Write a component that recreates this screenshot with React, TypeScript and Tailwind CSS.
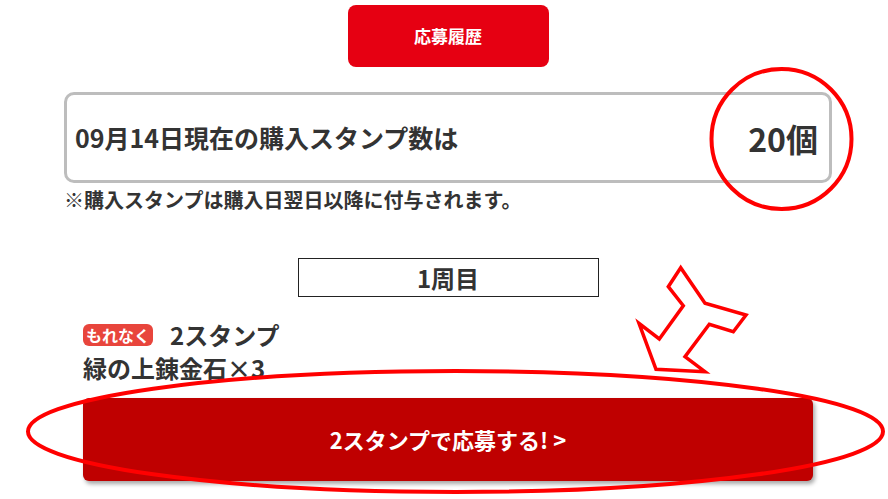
const font = { fontFamily: '"Noto Sans CJK JP", "Noto Sans", sans-serif' };

function Annotations() {
  return (
    <svg
      className="pointer-events-none absolute left-0 top-0"
      width="888"
      height="499"
      viewBox="0 0 888 499"
      fill="none"
    >
      <circle cx="781.5" cy="139" r="70" stroke="#ff0000" strokeWidth="4" />
      <polygon
        points="680.7,267.7 668.3,286.7 683.3,305.7 659.3,339 639,323.3 656,369.3 705,371.7 685,356.7 709.3,324.3 733.3,331.7 746,315 705,303.3"
        stroke="#ff0000"
        strokeWidth="3.5"
        strokeLinejoin="miter"
        fill="#ffffff"
      />
      <ellipse cx="455.5" cy="431.5" rx="427.5" ry="60.5" stroke="#ff0000" strokeWidth="4" />
    </svg>
  );
}

export default function App() {
  return (
    <div className="relative w-[888px] h-[499px] overflow-hidden bg-white text-[#333333]" style={font}>
      <div className="ml-[64px] w-[768px] pt-[5px]">
        <div className="mx-auto flex h-[62px] w-[201px] items-center justify-center rounded-lg bg-[#e60012] text-[17px] font-bold text-white">
          応募履歴
        </div>

        <div className="mt-[25px] flex h-[91px] items-center justify-between rounded-[10px] border-[3px] border-[#bdbdbd] pl-[8px] pr-[11px]">
          <span className="text-[25px] font-bold">09月14日現在の購入スタンプ数は</span>
          <span className="text-[32px] font-bold">20個</span>
        </div>
        <p className="mt-[4px] text-[20px] font-bold leading-[26px]">
          ※購入スタンプは購入日翌日以降に付与されます。
        </p>

        <div className="mx-auto mt-[45px] flex h-[39px] w-[301px] items-center justify-center border border-[#222222] text-[24px] font-bold">
          1周目
        </div>

        <div className="px-[19px]">
          <div className="mt-[26px] flex h-[24px] items-center gap-[17px]">
            <span className="flex h-[22px] items-center rounded-[6px] bg-[#e8453c] px-[3px] text-[16px] font-bold text-white">
              もれなく
            </span>
            <span className="text-[24px] font-bold">2スタンプ</span>
          </div>
          <div className="mt-[6px] text-[24px] font-bold leading-[30px]">緑の上錬金石×3</div>

          <button className="mt-[15px] flex h-[83px] w-full items-center justify-center rounded-[6px] bg-[#bf0000] text-[22px] font-bold text-white shadow-[2px_3px_4px_rgba(0,0,0,0.35)]">
            2スタンプで応募する! &gt;
          </button>
        </div>
      </div>
      <Annotations />
    </div>
  );
}
